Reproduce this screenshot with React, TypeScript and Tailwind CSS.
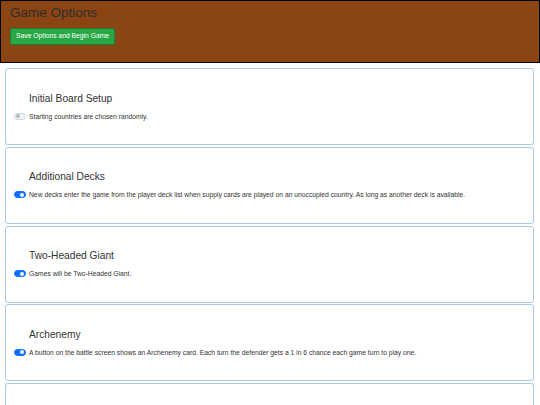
import { useState } from "react";

type Option = {
  id: string;
  title: string;
  description: string;
  enabled: boolean;
};

const initialOptions: Option[] = [
  {
    id: "setup",
    title: "Initial Board Setup",
    description: "Starting countries are chosen randomly.",
    enabled: false,
  },
  {
    id: "decks",
    title: "Additional Decks",
    description:
      "New decks enter the game from the player deck list when supply cards are played on an unoccupied country. As long as another deck is available.",
    enabled: true,
  },
  {
    id: "giant",
    title: "Two-Headed Giant",
    description: "Games will be Two-Headed Giant.",
    enabled: true,
  },
  {
    id: "archenemy",
    title: "Archenemy",
    description:
      "A button on the battle screen shows an Archenemy card. Each turn the defender gets a 1 in 6 chance each game turn to play one.",
    enabled: true,
  },
];

const Toggle = ({ on, onClick }: { on: boolean; onClick: () => void }) => (
  <button
    type="button"
    onClick={onClick}
    className={`relative w-[12px] h-[7px] rounded-full border shrink-0 ${
      on ? "bg-[#0d6efd] border-[#0d6efd]" : "bg-[#f3f4f6] border-[#d1d5db]"
    }`}
  >
    <span
      className={`absolute top-[0.5px] w-[4px] h-[4px] rounded-full ${
        on ? "right-[1px] bg-white" : "left-[1px] bg-[#b5b9be]"
      }`}
    />
  </button>
);

export default function App() {
  const [options, setOptions] = useState(initialOptions);

  const toggle = (id: string) =>
    setOptions((prev) =>
      prev.map((o) => (o.id === id ? { ...o, enabled: !o.enabled } : o)),
    );

  return (
    <div className="w-[540px] h-[405px] overflow-hidden bg-white font-['Liberation_Sans',Arial,sans-serif]">
      {/* Header */}
      <div className="h-[63px] bg-[#8b4513] border border-black px-[9px] pt-[3px]">
        <h1 className="text-[13.5px] leading-[17px] text-[#2e2e2e]">Game Options</h1>
        <button
          type="button"
          className="mt-[4px] h-[17px] px-[5px] bg-[#28a745] border border-[#1e7e34] rounded-[2px] text-white text-[6.75px] leading-none"
        >
          Save Options and Begin Game
        </button>
      </div>

      {/* Option cards */}
      <div className="flex flex-col gap-[1.75px] pl-[5px] pr-[6px] pt-[5px]">
        {options.map((o) => (
          <div
            key={o.id}
            className="h-[77px] shrink-0 border border-[#a9c9e6] rounded-[3px] bg-white pt-[23.5px] pl-[8px] pr-[8px]"
          >
            <h3 className="pl-[15px] text-[10.2px] leading-[12px] text-[#333]">{o.title}</h3>
            <div className="mt-[7px] flex items-center gap-[3px]">
              <Toggle on={o.enabled} onClick={() => toggle(o.id)} />
              <p className="text-[6.75px] leading-[9px] text-[#333]">{o.description}</p>
            </div>
          </div>
        ))}
        <div className="h-[77px] shrink-0 border border-[#a9c9e6] rounded-[3px] bg-white" />
      </div>
    </div>
  );
}
